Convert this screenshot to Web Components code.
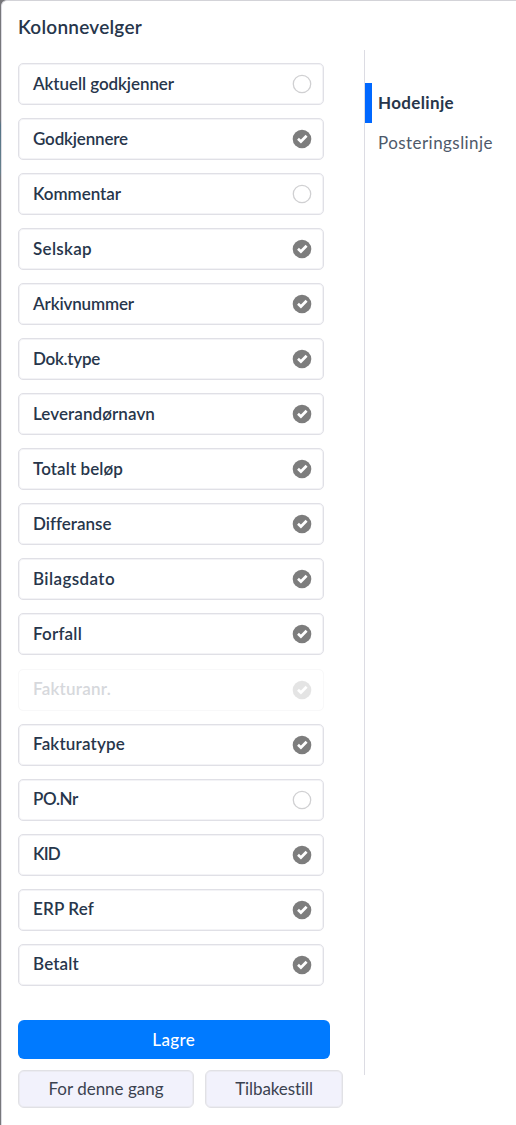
<!DOCTYPE html>
<html lang="nb">
<head>
<meta charset="utf-8">
<title>Kolonnevelger</title>
<style>
  body {
    margin: 0;
    height: 1125px;
    overflow: hidden;
    background: linear-gradient(#77777b, #77777b 120px, #557486 125px, #66808c 172px, #77777b 178px);
    color: #27364b;
    font-family: Lato, "Noto Sans", sans-serif;
    font-size: 17px;
  }
</style>
</head>
<body>
<column-picker heading="Kolonnevelger">
  <column-item width="141">Aktuell godkjenner</column-item>
  <column-item width="95" checked>Godkjennere</column-item>
  <column-item width="88">Kommentar</column-item>
  <column-item width="59" checked>Selskap</column-item>
  <column-item width="101" checked>Arkivnummer</column-item>
  <column-item width="67" checked>Dok.type</column-item>
  <column-item width="122" checked>Leverandørnavn</column-item>
  <column-item width="90" checked>Totalt beløp</column-item>
  <column-item width="78" checked>Differanse</column-item>
  <column-item width="82" checked>Bilagsdato</column-item>
  <column-item width="49" checked>Forfall</column-item>
  <column-item width="78" checked disabled>Fakturanr.</column-item>
  <column-item width="92" checked>Fakturatype</column-item>
  <column-item width="45">PO.Nr</column-item>
  <column-item width="27" checked>KID</column-item>
  <column-item width="61" checked>ERP Ref</column-item>
  <column-item width="46" checked>Betalt</column-item>

  <action-button slot="actions" primary width="43">Lagre</action-button>
  <action-button slot="actions" width="115" style="--button-width: 176px">For denne gang</action-button>
  <action-button slot="actions" width="78" style="--button-width: 138px">Tilbakestill</action-button>

  <line-tab slot="tabs" width="76" active>Hodelinje</line-tab>
  <line-tab slot="tabs" width="115">Posteringslinje</line-tab>
</column-picker>

<script>
// Text that is tracked in or out to fill a given width
class FitText extends HTMLElement {
  constructor() {
    super();
    this.attachShadow({ mode: 'open' });
    this.shadowRoot.innerHTML = `
      <style>
        :host { display: inline-block; white-space: nowrap; }
      </style>
      <slot></slot>
    `;
  }

  connectedCallback() {
    const width = parseFloat(this.getAttribute('width'));
    const length = parseInt(this.getAttribute('length'), 10);
    if (!width || !length) return;
    const natural = this.getBoundingClientRect().width;
    this.style.letterSpacing = `${(width - natural) / length}px`;
  }
}

class CheckMark extends HTMLElement {
  constructor() {
    super();
    this.attachShadow({ mode: 'open' });
  }

  connectedCallback() {
    const icon = this.hasAttribute('checked')
      ? `<circle cx="10" cy="10" r="9.3" fill="#7d7d7d"/>
         <path d="M6 9.8 8.9 12.5 14.6 6.7" fill="none" stroke="#fff" stroke-width="2.7"/>`
      : '<circle cx="10" cy="10" r="8.7" fill="#fff" stroke="#d0d0d2" stroke-width="1.3"/>';
    this.shadowRoot.innerHTML = `
      <style>
        :host { display: block; width: 20px; height: 20px; }
        svg { display: block; }
      </style>
      <svg width="20" height="20" viewBox="0 0 20 20">${icon}</svg>
    `;
  }
}

class ColumnItem extends HTMLElement {
  constructor() {
    super();
    this.attachShadow({ mode: 'open' });
  }

  connectedCallback() {
    const checked = this.hasAttribute('checked') ? 'checked' : '';
    this.shadowRoot.innerHTML = `
      <style>
        :host {
          display: flex;
          align-items: center;
          justify-content: space-between;
          box-sizing: border-box;
          height: 42px;
          padding: 0 11px 0 14px;
          border: 1px solid #e0e0e6;
          border-radius: 5px;
          box-shadow: inset 0 0 0 1px #f3f3f6;
          background: #fff;
          font-weight: 600;
        }
        :host([disabled]) { border-color: #f8f8f9; box-shadow: none; color: #d6d8dc; }
        :host([disabled]) check-mark { opacity: 0.2; }
        fit-text { line-height: 22px; padding-bottom: 1px; }
      </style>
      <fit-text width="${this.getAttribute('width')}" length="${this.textContent.length}"><slot></slot></fit-text>
      <check-mark ${checked}></check-mark>
    `;
  }
}

class ActionButton extends HTMLElement {
  constructor() {
    super();
    this.attachShadow({ mode: 'open' });
  }

  connectedCallback() {
    this.shadowRoot.innerHTML = `
      <style>
        :host { display: block; width: var(--button-width); }
        :host([primary]) { width: 311.5px; margin-right: 10px; }
        button {
          display: block;
          box-sizing: border-box;
          width: 100%;
          height: 38px;
          padding: 0 0 1px;
          border: 1px solid #e1e1e5;
          border-radius: 6px;
          box-shadow: inset 0 0 0 1px #ebebf2;
          background: #f2f2fc;
          color: #3b4250;
          font: inherit;
        }
        :host([primary]) button {
          height: 39.5px;
          border: 0;
          box-shadow: none;
          background: #007aff;
          color: #fff;
          font-weight: 500;
        }
      </style>
      <button><fit-text width="${this.getAttribute('width')}" length="${this.textContent.length}"><slot></slot></fit-text></button>
    `;
  }
}

class LineTab extends HTMLElement {
  constructor() {
    super();
    this.attachShadow({ mode: 'open' });
  }

  connectedCallback() {
    this.shadowRoot.innerHTML = `
      <style>
        :host {
          display: flex;
          align-items: center;
          box-sizing: border-box;
          height: 40px;
          padding-left: 6px;
          border-left: 7px solid transparent;
          color: #4e596a;
        }
        :host([active]) { border-color: #0068ff; color: #27364b; font-weight: 700; }
      </style>
      <fit-text width="${this.getAttribute('width')}" length="${this.textContent.length}"><slot></slot></fit-text>
    `;
  }
}

class ColumnPicker extends HTMLElement {
  constructor() {
    super();
    this.attachShadow({ mode: 'open' });
  }

  connectedCallback() {
    this.shadowRoot.innerHTML = `
      <style>
        :host {
          display: flex;
          box-sizing: border-box;
          height: 1125px;
          margin-left: 1px;
          padding-left: 16px;
          border-left: 1px solid #dcdce3;
          border-top: 1px solid #d3d3d8;
          border-top-left-radius: 6px;
          background: #fff;
        }
        .main { width: 346px; }
        h1 {
          margin: 0;
          padding-top: 13px;
          height: 49px;
          font-size: 19px;
          line-height: 25px;
          font-weight: 600;
        }
        .list { display: grid; gap: 13.05px; width: 306px; }
        .actions { display: flex; flex-wrap: wrap; gap: 10.5px 11px; margin-top: 34px; }
        nav {
          box-sizing: border-box;
          height: 1025px;
          margin-top: 49px;
          padding-top: 32.5px;
          border-left: 1px solid #dcdce3;
        }
      </style>
      <div class="main">
        <h1><fit-text width="124" length="13">${this.getAttribute('heading')}</fit-text></h1>
        <div class="list"><slot></slot></div>
        <div class="actions"><slot name="actions"></slot></div>
      </div>
      <nav><slot name="tabs"></slot></nav>
    `;
  }
}

customElements.define('column-picker', ColumnPicker);
customElements.define('column-item', ColumnItem);
customElements.define('action-button', ActionButton);
customElements.define('line-tab', LineTab);
customElements.define('check-mark', CheckMark);
customElements.define('fit-text', FitText);
</script>
</body>
</html>
